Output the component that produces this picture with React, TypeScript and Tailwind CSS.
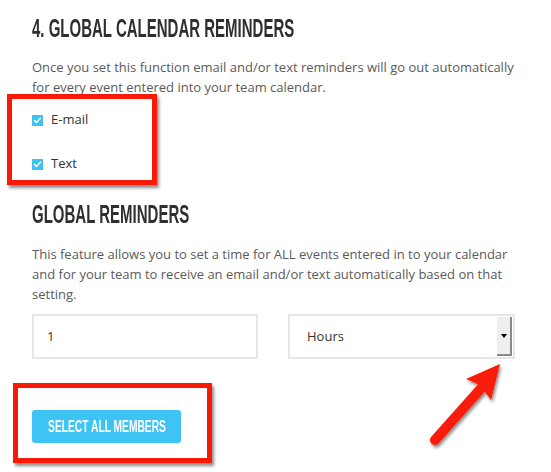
import { Check } from 'lucide-react';

const heading = "font-['Liberation_Sans',sans-serif] font-bold uppercase";
const body = "font-['Open_Sans',sans-serif] text-[13px] leading-[20px] text-[#5a5a5a]";

function Checkbox({ label }: { label: string }) {
  return (
    <label className="flex items-center gap-[8px] h-[20px]">
      <span className="flex items-center justify-center w-[11px] h-[11px] bg-[#3fc1f0]">
        <Check className="w-[9px] h-[9px] text-white" strokeWidth={4} />
      </span>
      <span className="font-['Open_Sans',sans-serif] text-[13px] text-[#333]">{label}</span>
    </label>
  );
}

export default function App() {
  return (
    <div className="relative w-[551px] h-[472px] bg-white overflow-hidden">
      <div className="pl-[32px] pr-[20px] pt-[15px]">
        {/* Seccion 4 */}
        <h2 className={`${heading} text-[25px] leading-[26px] text-[#2f2f2f] whitespace-nowrap origin-left scale-x-[0.6]`}>
          4. Global Calendar Reminders
        </h2>
        <p className={`${body} mt-[16px]`}>
          Once you set this function email and/or text reminders will go out automatically
          <br />
          for every event entered into your team calendar.
        </p>
        <div className="mt-[13px] flex flex-col gap-[24px]">
          <Checkbox label="E-mail" />
          <Checkbox label="Text" />
        </div>

        {/* Recordatorios globales */}
        <h2 className={`${heading} text-[25px] leading-[26px] text-[#2f2f2f] mt-[27px] whitespace-nowrap origin-left scale-x-[0.6]`}>
          Global Reminders
        </h2>
        <p className={`${body} mt-[17px]`}>
          This feature allows you to set a time for ALL events entered in to your calendar
          <br />
          and for your team to receive an email and/or text automatically based on that
          <br />
          setting.
        </p>

        <div className="mt-[10px] flex gap-[30px]">
          <div className="w-[226px] h-[45px] border-2 border-[#e6e6e6] flex items-center pl-[13px] font-['Open_Sans',sans-serif] text-[13px] text-[#333]">
            1
          </div>
          <div className="w-[227px] h-[45px] border-2 border-[#e6e6e6] flex items-center justify-between pl-[17px] pr-[1px] font-['Open_Sans',sans-serif] text-[13px] text-[#333]">
            <span>Hours</span>
            <span className="w-[15px] h-[39px] bg-[#efefef] border-r-2 border-b-2 border-[#8a8a8a] flex items-center justify-center">
              <span className="w-0 h-0 border-l-[3px] border-r-[3px] border-t-[4px] border-l-transparent border-r-transparent border-t-black" />
            </span>
          </div>
        </div>

        <button className="mt-[51px] w-[149px] h-[33px] rounded-[3px] bg-[#3ec4f4] flex items-center justify-center">
          <span className={`${heading} text-[16px] leading-[16px] text-white whitespace-nowrap scale-x-[0.64]`}>
            Select All Members
          </span>
        </button>
      </div>

      {/* Anotaciones en rojo */}
      <div className="absolute left-[7px] top-[94px] w-[150px] h-[91px] border-[5px] border-[#f81a07] shadow-[2px_3px_3px_rgba(0,0,0,0.45)]" />
      <div className="absolute left-[13px] top-[383px] w-[199px] h-[80px] border-[5px] border-[#f81a07] shadow-[2px_3px_3px_rgba(0,0,0,0.45)]" />
      <svg className="absolute left-0 top-0" width="551" height="472" viewBox="0 0 551 472">
        <defs>
          <filter id="sh" x="-20%" y="-20%" width="140%" height="140%">
            <feDropShadow dx="1.5" dy="2.5" stdDeviation="1.5" floodColor="#000" floodOpacity="0.45" />
          </filter>
        </defs>
        <g filter="url(#sh)" fill="#f81a07">
          <line x1="435" y1="440" x2="484" y2="385" stroke="#f81a07" strokeWidth="10" strokeLinecap="round" />
          <polygon points="500,364 466,379 480,385 491,400" />
        </g>
      </svg>
    </div>
  );
}
